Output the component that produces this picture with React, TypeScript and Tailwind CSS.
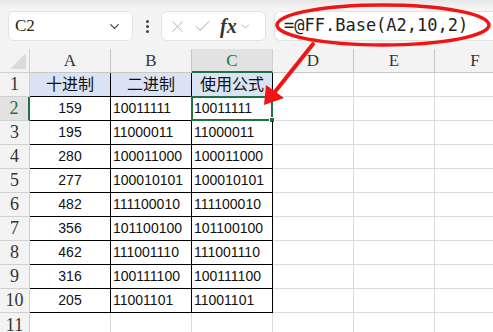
import { ChevronDown, X, Check } from "lucide-react";

const rows = [
  ["159", "10011111", "10011111"],
  ["195", "11000011", "11000011"],
  ["280", "100011000", "100011000"],
  ["277", "100010101", "100010101"],
  ["482", "111100010", "111100010"],
  ["356", "101100100", "101100100"],
  ["462", "111001110", "111001110"],
  ["316", "100111100", "100111100"],
  ["205", "11001101", "11001101"],
];

const cols = ["A", "B", "C", "D", "E", "F"];

const hdrFont = { fontFamily: '"Liberation Serif", "DejaVu Serif", "Times New Roman", serif' };
const cellFont = { fontFamily: '"Liberation Sans", "Noto Sans CJK SC", sans-serif' };

export default function App() {
  return (
    <div className="relative h-[332px] w-[493px] overflow-hidden bg-white">
      {/* formula bar area */}
      <div className="flex h-[49px] items-center gap-2 bg-gradient-to-b from-[#e6e6e6] from-0% via-[#f4f4f4] via-15% to-[#f4f4f4] pl-2 pt-[3px]">
        <div
          className="flex h-[30px] w-[125px] shrink-0 items-center justify-between rounded-md border border-[#e3e3e3] bg-white pl-[6px] pr-[10px] text-[17px] text-[#222]"
          style={hdrFont}
        >
          <span>C2</span>
          <ChevronDown size={15} strokeWidth={2} className="text-[#444]" />
        </div>
        <div className="flex w-[12px] flex-col items-center gap-[2px]">
          <span className="h-[3px] w-[3px] rounded-full bg-[#444]" />
          <span className="h-[3px] w-[3px] rounded-full bg-[#444]" />
          <span className="h-[3px] w-[3px] rounded-full bg-[#444]" />
        </div>
        <div className="flex h-[30px] w-[105px] shrink-0 items-center gap-[6px] rounded-md border border-[#e3e3e3] bg-white pl-[6px]">
          <X size={19} strokeWidth={1.3} className="text-[#bdbdbd]" />
          <Check size={19} strokeWidth={1.3} className="text-[#bdbdbd]" />
          <span
            className="ml-[2px] text-[20px] font-bold italic text-[#333]"
            style={hdrFont}
          >
            fx
          </span>
          <ChevronDown size={13} strokeWidth={1.5} className="-ml-[4px] text-[#aaa]" />
        </div>
        <div className="flex h-[30px] flex-1 items-center rounded-l-md border border-r-0 border-[#e3e3e3] bg-white pl-[9px]">
          <span
            className="text-[17px] text-[#222]"
            style={{ fontFamily: '"DejaVu Sans Mono", "Liberation Mono", monospace' }}
          >
            =@FF.Base(A2,10,2)
          </span>
        </div>
      </div>

      {/* sheet grid */}
      <div className="grid grid-cols-[30px_81px_81px_81px_81px_81px_81px_1fr] auto-rows-[24px]">
        <div className="relative border-b border-r border-[#d0d0d0] bg-[#f3f3f3]">
          <div className="absolute bottom-[3px] right-[3px] h-0 w-0 border-b-[16px] border-l-[16px] border-b-[#dadada] border-l-transparent" />
        </div>
        {cols.map((c) => (
          <div
            key={c}
            className={
              c === "C"
                ? "flex items-center justify-center border-b-2 border-r border-b-[#217346] border-r-[#d0d0d0] bg-[#e2e2e2] pt-[2px] text-[17px] text-[#217346]"
                : "flex items-center justify-center border-b border-r border-[#c8c8c8] bg-[#f3f3f3] text-[17px] text-[#333]"
            }
            style={hdrFont}
          >
            {c}
          </div>
        ))}
        <div className="border-b border-[#c8c8c8] bg-[#f3f3f3]" />

        {Array.from({ length: 10 }).map((_, i) => {
          const r = i + 1;
          const data =
            r === 1 ? ["十进制", "二进制", "使用公式"] : rows[r - 2];
          return [
            <div
              key={`h${r}`}
              className={
                r === 2
                  ? "flex items-center justify-center border-b border-r-2 border-b-[#d0d0d0] border-r-[#217346] bg-[#e2e2e2] text-[18px] text-[#217346]"
                  : "flex items-center justify-center border-b border-r border-[#d0d0d0] bg-[#f3f3f3] text-[18px] text-[#333]"
              }
              style={hdrFont}
            >
              {r}
            </div>,
            ...data.map((v, j) => (
              <div
                key={`c${r}${j}`}
                className={
                  "relative flex items-center border-b border-r border-black text-[14px] text-[#111] " +
                  (r === 1
                    ? "justify-center bg-[#dae3f3] text-[16px] "
                    : j === 0
                      ? "justify-center "
                      : "pl-[2px] ")
                }
                style={cellFont}
              >
                {v}
                {r === 2 && j === 2 && (
                  <div className="absolute -left-[1px] -top-[1px] h-[25px] w-[82px] border-2 border-[#217346]">
                    <div className="absolute -bottom-[4px] -right-[4px] h-[6px] w-[6px] border border-white bg-[#217346]" />
                  </div>
                )}
              </div>
            )),
            ...[0, 1, 2].map((k) => (
              <div
                key={`e${r}${k}`}
                className="border-b border-r border-[#dcdcdc]"
              />
            )),
            <div key={`x${r}`} className="border-b border-[#dcdcdc]" />,
          ];
        })}

        <div
          className="flex items-center justify-center border-r border-[#d0d0d0] bg-[#f3f3f3] text-[18px] text-[#333]"
          style={hdrFont}
        >
          11
        </div>
        {cols.map((c) => (
          <div key={`r11${c}`} className="border-r border-[#dcdcdc]" />
        ))}
        <div />
      </div>

      {/* red annotation */}
      <svg className="pointer-events-none absolute left-0 top-0" width="493" height="332">
        <ellipse cx="383" cy="25" rx="106" ry="20" fill="none" stroke="#f01414" strokeWidth="3.5" />
        <line x1="313" y1="44" x2="274" y2="93" stroke="#f01414" strokeWidth="4" strokeLinecap="round" />
        <polygon points="264,105 266,85 284,98" fill="#f01414" />
      </svg>
    </div>
  );
}
